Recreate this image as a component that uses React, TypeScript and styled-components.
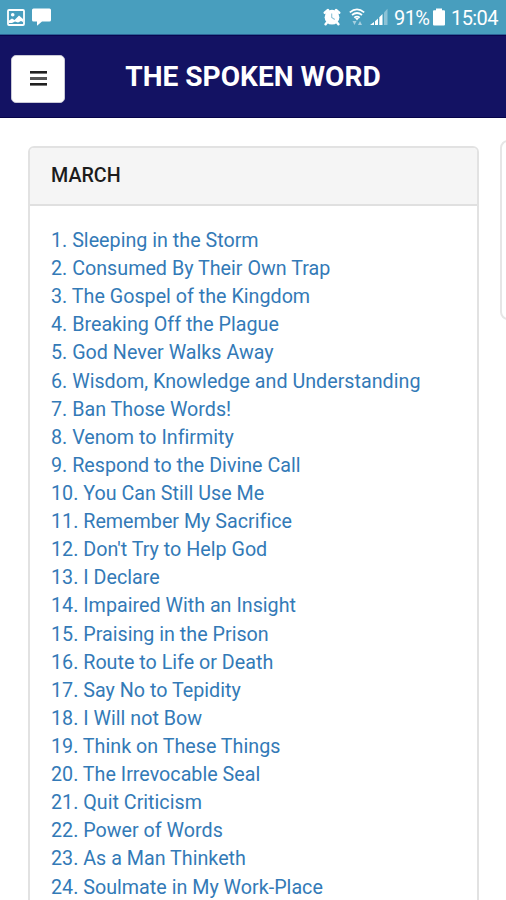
import React from "react";
import styled, { createGlobalStyle } from "styled-components";

const GlobalStyle = createGlobalStyle`
  *, *::before, *::after { box-sizing: border-box; }
  html, body { margin: 0; padding: 0; background: #fff; overflow: hidden; }
  body { font-family: Roboto, "Liberation Sans", sans-serif; }
`;

const Screen = styled.div`
  display: flex;
  flex-direction: column;
  width: 506px;
  height: 900px;
  overflow: hidden;
  background: #fff;
`;

const StatusBar = styled.div`
  flex: none;
  display: flex;
  align-items: center;
  justify-content: space-between;
  height: 35px;
  padding: 0 8px 0 7px;
  background: #489ebe;
  border-bottom: 1px solid #2c6398;
  color: #fff;
`;

const StatusGroup = styled.div`
  display: flex;
  align-items: center;
  height: 100%;
`;

const Glyph = styled.svg<{ $gap?: number }>`
  display: block;
  flex: none;
  margin-right: ${({ $gap = 0 }) => $gap}px;
`;

const StatusText = styled.span<{ $width: number; $gap?: number }>`
  width: ${({ $width }) => $width}px;
  margin-right: ${({ $gap = 0 }) => $gap}px;
  font-size: 20px;
  line-height: 34px;
  letter-spacing: -0.6px;
  white-space: nowrap;
  padding-top: 2px;
`;

const AppHeader = styled.header`
  flex: none;
  display: grid;
  grid-template-columns: 54px 1fr 54px;
  align-items: start;
  height: 83px;
  padding: 20px 11px 0;
  background: #131263;
  border-top: 1px solid #080650;
  border-bottom: 1px solid #060449;
`;

const MenuButton = styled.button`
  display: flex;
  align-items: center;
  justify-content: center;
  width: 54px;
  height: 48px;
  margin-top: -1px;
  padding: 0 0 2px;
  border: 1px solid #c9c9d6;
  border-radius: 5px;
  background: #fff;
`;

const Title = styled.h1`
  margin: 0;
  padding-top: 3px;
  text-align: center;
  font-size: 28.1px;
  line-height: 36px;
  font-weight: 700;
  letter-spacing: 0;
  color: #fff;
  white-space: nowrap;
`;

const Carousel = styled.main`
  flex: 1;
  min-height: 0;
  display: flex;
  align-items: flex-start;
  gap: 21px;
  padding-left: 28px;
  overflow: hidden;
`;

const Card = styled.section`
  flex: none;
  width: 451px;
  height: 820px;
  margin-top: 28px;
  border: 2px solid #e2e2e2;
  border-radius: 6px;
  overflow: hidden;
`;

const NextCard = styled.section`
  flex: none;
  width: 451px;
  height: 180px;
  margin-top: 22px;
  border: 2px solid #e6e6e6;
  border-radius: 8px;
`;

const CardHeader = styled.h2`
  height: 58px;
  margin: 0;
  padding: 0 21px;
  background: #f5f5f5;
  border-bottom: 2px solid #e0e0e0;
  font-size: 19.7px;
  line-height: 55px;
  font-weight: 500;
  color: #1c1c1c;
`;

const TopicList = styled.ol`
  margin: 0;
  padding: 21px 21px;
  list-style: none;
`;

const Topic = styled.li`
  height: 28.12px;
  font-size: 19.7px;
  line-height: 28.12px;
  white-space: nowrap;
  letter-spacing: 0.01px;
`;

const TopicLink = styled.a`
  color: #337ab7;
  text-decoration: none;
`;

const topics = [
  "Sleeping in the Storm",
  "Consumed By Their Own Trap",
  "The Gospel of the Kingdom",
  "Breaking Off the Plague",
  "God Never Walks Away",
  "Wisdom, Knowledge and Understanding",
  "Ban Those Words!",
  "Venom to Infirmity",
  "Respond to the Divine Call",
  "You Can Still Use Me",
  "Remember My Sacrifice",
  "Don't Try to Help God",
  "I Declare",
  "Impaired With an Insight",
  "Praising in the Prison",
  "Route to Life or Death",
  "Say No to Tepidity",
  "I Will not Bow",
  "Think on These Things",
  "The Irrevocable Seal",
  "Quit Criticism",
  "Power of Words",
  "As a Man Thinketh",
  "Soulmate in My Work-Place",
];

const PictureIcon = () => (
  <Glyph width="18" height="17" viewBox="0 0 18 17" $gap={7}>
    <rect x="1" y="1" width="16" height="15" rx="1" fill="none" stroke="#fff" strokeWidth="1.8" />
    <circle cx="5.7" cy="5.7" r="1.8" fill="#fff" />
    <path d="M2 11.5 L5 9.5 L7.5 11 L12 6.5 L16 10 V13 L14 12 L11 13.5 L8 12.5 L5 14 L2 14 Z" fill="#fff" />
  </Glyph>
);

const MessageIcon = () => (
  <Glyph width="19" height="18" viewBox="0 0 19 18">
    <path d="M1.5 0.5 H17.5 Q19 0.5 19 2 V12 Q19 13.5 17.5 13.5 H10 L5 17.8 V13.5 H1.5 Q0 13.5 0 12 V2 Q0 0.5 1.5 0.5 Z" fill="#fff" />
  </Glyph>
);

const AlarmIcon = () => (
  <Glyph width="18" height="18" viewBox="0 0 18 18" $gap={8}>
    <path d="M1.8 4.8 L5 2 M16.2 4.8 L13 2 M4 14.5 L2.6 16.3 M14 14.5 L15.4 16.3" stroke="#fff" strokeWidth="2.5" strokeLinecap="round" />
    <circle cx="9" cy="9.2" r="7.4" fill="#fff" />
    <path d="M8.7 5.5 V9.5 L11.8 11.5" fill="none" stroke="#8cc2d6" strokeWidth="1.1" />
  </Glyph>
);

const WifiIcon = () => (
  <Glyph width="16" height="18" viewBox="0 0 16 18" $gap={5}>
    <g fill="none" stroke="#fff" strokeWidth="1.7">
      <path d="M0.8 4.3 Q8 -1.6 15.2 4.3" />
      <path d="M3 7 Q8 3 13 7" />
      <path d="M5.2 9.6 Q8 7.5 10.8 9.6" />
    </g>
    <path d="M6 10 H10 L8 12.5 Z" fill="#fff" />
    <path d="M3.5 13 H7.5 L5.5 17 Z M9 17 H13 L11 13 Z" fill="#a6d0e0" />
  </Glyph>
);

const SignalIcon = () => (
  <Glyph width="18" height="18" viewBox="0 0 18 18" $gap={6}>
    <path d="M0 17 L4 14 V17 Z M5 13.2 L8 10.5 V17 H5 Z M9.3 9.3 L12.5 6 V17 H9.3 Z" fill="#fff" />
    <path d="M14 4.5 L17.5 0.8 V17 H14 Z" fill="#8cc2d6" />
  </Glyph>
);

const BatteryIcon = () => (
  <Glyph width="12" height="18" viewBox="0 0 12 18" $gap={6}>
    <path d="M3 0.5 H9 V2.2 H11 Q12 2.2 12 3.2 V16.5 Q12 17.5 11 17.5 H1 Q0 17.5 0 16.5 V3.2 Q0 2.2 1 2.2 H3 Z" fill="#fff" />
  </Glyph>
);

const HamburgerIcon = () => (
  <Glyph width="17" height="15" viewBox="0 0 17 15">
    <rect x="0" y="0" width="17" height="2.6" fill="#202020" />
    <rect x="0" y="6" width="17" height="3" fill="#555" />
    <rect x="0" y="12" width="17" height="2.6" fill="#202020" />
  </Glyph>
);

export default function App() {
  return (
    <Screen>
      <GlobalStyle />
      <StatusBar>
        <StatusGroup>
          <PictureIcon />
          <MessageIcon />
        </StatusGroup>
        <StatusGroup>
          <AlarmIcon />
          <WifiIcon />
          <SignalIcon />
          <StatusText $width={35} $gap={4}>91%</StatusText>
          <BatteryIcon />
          <StatusText $width={47}>15:04</StatusText>
        </StatusGroup>
      </StatusBar>
      <AppHeader>
        <MenuButton aria-label="Menu">
          <HamburgerIcon />
        </MenuButton>
        <Title>THE SPOKEN WORD</Title>
      </AppHeader>
      <Carousel>
        <Card>
          <CardHeader>MARCH</CardHeader>
          <TopicList>
            {topics.map((topic, index) => (
              <Topic key={topic}>
                <TopicLink>{`${index + 1}. ${topic}`}</TopicLink>
              </Topic>
            ))}
          </TopicList>
        </Card>
        <NextCard />
      </Carousel>
    </Screen>
  );
}
